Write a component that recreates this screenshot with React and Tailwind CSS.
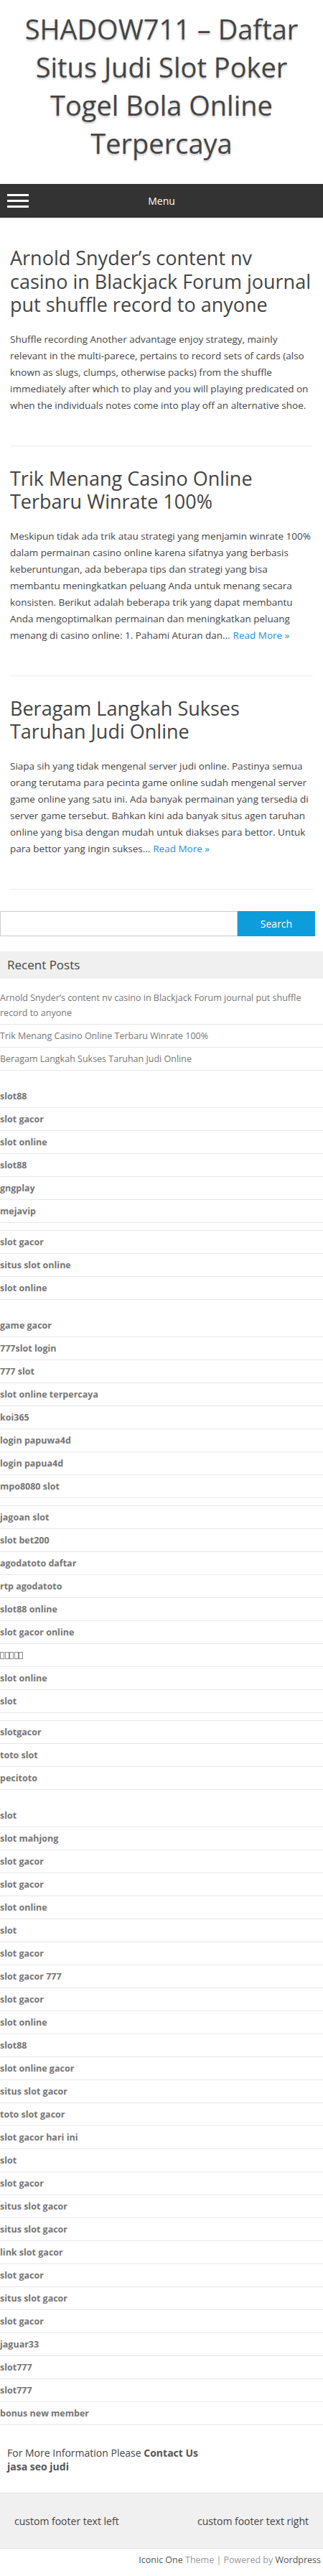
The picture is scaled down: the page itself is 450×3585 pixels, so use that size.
import React from 'react';

const posts = [
  {
    title: 'Arnold Snyder’s content nv casino in Blackjack Forum journal put shuffle record to anyone',
    body: 'Shuffle recording Another advantage enjoy strategy, mainly relevant in the multi-parece, pertains to record sets of cards (also known as slugs, clumps, otherwise packs) from the shuffle immediately after which to play and you will playing predicated on when the individuals notes come into play off an alternative shoe.',
    more: false,
  },
  {
    title: 'Trik Menang Casino Online Terbaru Winrate 100%',
    body: 'Meskipun tidak ada trik atau strategi yang menjamin winrate 100% dalam permainan casino online karena sifatnya yang berbasis keberuntungan, ada beberapa tips dan strategi yang bisa membantu meningkatkan peluang Anda untuk menang secara konsisten. Berikut adalah beberapa trik yang dapat membantu Anda mengoptimalkan permainan dan meningkatkan peluang menang di casino online: 1. Pahami Aturan dan…',
    more: true,
  },
  {
    title: 'Beragam Langkah Sukses Taruhan Judi Online',
    body: 'Siapa sih yang tidak mengenal server judi online. Pastinya semua orang terutama para pecinta game online sudah mengenal server game online yang satu ini. Ada banyak permainan yang tersedia di server game tersebut. Bahkan kini ada banyak situs agen taruhan online yang bisa dengan mudah untuk diakses para bettor. Untuk para bettor yang ingin sukses…',
    more: true,
  },
];

const recent = [
  'Arnold Snyder’s content nv casino in Blackjack Forum journal put shuffle record to anyone',
  'Trik Menang Casino Online Terbaru Winrate 100%',
  'Beragam Langkah Sukses Taruhan Judi Online',
];

// "#tofu" marks the link whose name the site font could not draw (shown as empty boxes)
const linkWidgets = [
  ['slot88', 'slot gacor', 'slot online', 'slot88', 'gngplay', 'mejavip', '', 'slot gacor', 'situs slot online', 'slot online'],
  ['game gacor', '777slot login', '777 slot', 'slot online terpercaya', 'koi365', 'login papuwa4d', 'login papua4d', 'mpo8080 slot', '', 'jagoan slot', 'slot bet200', 'agodatoto daftar', 'rtp agodatoto', 'slot88 online', 'slot gacor online', '#tofu', 'slot online', 'slot', '', 'slotgacor', 'toto slot', 'pecitoto'],
  ['slot', 'slot mahjong', 'slot gacor', 'slot gacor', 'slot online', 'slot', 'slot gacor', 'slot gacor 777', 'slot gacor', 'slot online', 'slot88', 'slot online gacor', 'situs slot gacor', 'toto slot gacor', 'slot gacor hari ini', 'slot', 'slot gacor', 'situs slot gacor', 'situs slot gacor', 'link slot gacor', 'slot gacor', 'situs slot gacor', 'slot gacor', 'jaguar33', 'slot777', 'slot777', 'bonus new member'],
];

function Post({ post, first }) {
  return (
    <article className={`pb-[44px] border-b border-[#ededed] ${first ? '' : 'pt-[29px]'}`}>
      <h2 className="text-[27px] leading-[32.5px] text-[#444]">{post.title}</h2>
      <p className="mt-[20px] text-[13.5px] leading-[23px] text-[#444] -mr-[2px]">
        {post.body}
        {post.more && (
          <a href="#" className="ml-[4px] text-[#1e8fd9]">Read More »</a>
        )}
      </p>
    </article>
  );
}

function LinkItem({ item }) {
  if (!item) return null;
  if (item === '#tofu') {
    return (
      <a href="#" aria-label="slot" className="flex items-center h-[21px] gap-[0.5px]">
        {[0, 1, 2, 3, 4].map((n) => (
          <span key={n} className="w-[6px] h-[10px] border border-[#8a8a8a]"></span>
        ))}
      </a>
    );
  }
  return <a href="#" className="block leading-[21px]">{item}</a>;
}

export default function App() {
  return (
    <div className="w-[450px] bg-white font-['Open_Sans',sans-serif] text-[#444]">
      {/* Site title */}
      <header className="px-[14px] pt-[14px] pb-[30px] text-center">
        <h1 className="text-[38px] leading-[53px] text-[#444] [text-shadow:0_2px_3px_rgba(0,0,0,0.25)]">
          SHADOW711 – Daftar Situs Judi Slot Poker Togel Bola Online Terpercaya
        </h1>
      </header>

      {/* Menu bar */}
      <nav className="grid grid-cols-[1fr_auto_1fr] items-center h-[47px] bg-[#333] px-[10px]">
        <div className="flex flex-col gap-[5px] w-[30px]">
          <span className="h-[3px] bg-white"></span>
          <span className="h-[3px] bg-white"></span>
          <span className="h-[3px] bg-white"></span>
        </div>
        <span className="text-white text-[14px] leading-none">Menu</span>
        <div></div>
      </nav>

      {/* Posts */}
      <main className="px-[14px] pt-[40px]">
        {posts.map((p, i) => (
          <Post key={i} post={p} first={i === 0} />
        ))}
      </main>

      {/* Sidebar */}
      <aside className="mt-[30px]">
        <form className="flex h-[35px]" onSubmit={(e) => e.preventDefault()}>
          <input type="text" className="w-[331px] h-full border border-[#ccc] bg-white outline-none" />
          <button type="submit" className="w-[108px] h-full bg-[#0d9ddb] text-white text-[14px]">Search</button>
        </form>

        <section className="mt-[21px] mb-[20px]">
          <h3 className="h-[38px] flex items-center px-[10px] bg-[#f0f0f0] text-[17px] text-[#444]">Recent Posts</h3>
          <ul className="mt-[11.5px]">
            {recent.map((r, i) => (
              <li key={i} className="py-[5px] leading-[21px] border-b border-[#e8e8e8] text-[12.5px] text-[#757575]">
                <a href="#">{r}</a>
              </li>
            ))}
          </ul>
        </section>

        {linkWidgets.map((list, w) => (
          <section key={w} className={w < linkWidgets.length - 1 ? 'mb-[20px]' : ''}>
            <ul>
              {list.map((item, i) => (
                <li key={i} className="py-[5px] border-b border-[#e8e8e8] text-[12.5px] font-bold text-[#757575]">
                  <LinkItem item={item} />
                </li>
              ))}
            </ul>
          </section>
        ))}
      </aside>

      {/* Info */}
      <div className="mt-[29px] px-[10px] text-[14px] leading-[19px] text-[#444]">
        <p>
          For More Information Please <a href="#" className="font-bold text-[#555]">Contact Us</a>
        </p>
        <p>
          <a href="#" className="font-bold text-[#555]">jasa seo judi</a>
        </p>
      </div>

      {/* Footer */}
      <footer className="mt-[27px]">
        <div className="h-[78px] flex items-center justify-between px-[20px] bg-[#f0f0f0] border-t border-b border-[#e3e3e3] text-[14px] text-[#444]">
          <span>custom footer text left</span>
          <span>custom footer text right</span>
        </div>
        <p className="pt-[6px] pb-[7px] pr-[3px] text-right text-[12.5px] leading-[20px] text-[#999]">
          <a href="#" className="text-[#555]">Iconic One</a> Theme | Powered by <a href="#" className="text-[#555]">Wordpress</a>
        </p>
      </footer>
    </div>
  );
}
